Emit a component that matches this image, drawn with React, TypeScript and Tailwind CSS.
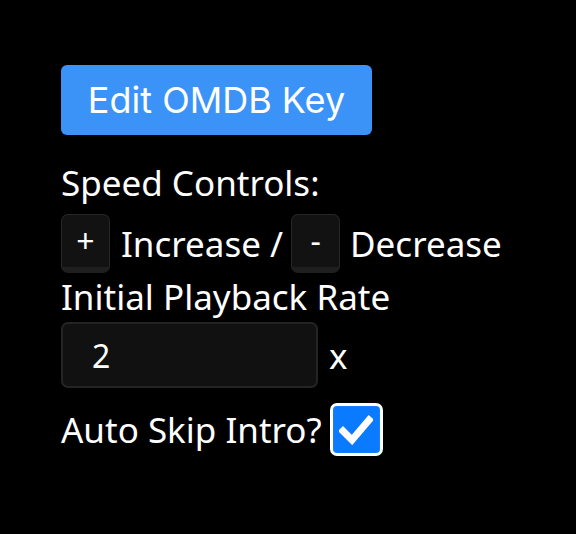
import React from "react";

export default function App() {
  const font = { fontFamily: '"Noto Sans", "Open Sans", sans-serif' };
  return (
    <div className="min-h-[534px] w-[576px] bg-black text-white" style={font}>
      <div className="flex flex-col items-start pl-[61px] pt-[65px]">
        <button
          className="h-[70px] w-[311px] rounded-[6px] bg-[#3b93f8] text-[36px] text-white leading-none"
          style={{ fontFamily: 'Inter, "Noto Sans", sans-serif' }}
        >
          Edit OMDB Key
        </button>
        <div className="mt-[26px] text-[35px] leading-[44px]">Speed Controls:</div>
        <div className="mt-[9px] flex items-center text-[35px] leading-[44px]">
          <kbd className="flex h-[59px] w-[49px] items-center justify-center rounded-[7px] border border-[#262626] border-b-[6px] border-b-[#1f1f1f] bg-[#121212] text-[32px] font-[inherit]">
            +
          </kbd>
          <span className="ml-[11px]">Increase /</span>
          <kbd className="ml-[8px] flex h-[59px] w-[49px] items-center justify-center rounded-[7px] border border-[#262626] border-b-[6px] border-b-[#1f1f1f] bg-[#121212] text-[32px] font-[inherit]">
            -
          </kbd>
          <span className="ml-[10px]">Decrease</span>
        </div>
        <div className="mt-[2px] text-[35px] leading-[44px]">Initial Playback Rate</div>
        <div className="mt-[3px] flex items-center">
          <input
            readOnly
            value="2"
            className="h-[66px] w-[257px] rounded-[7px] border-2 border-[#242424] bg-[#111111] pl-[29px] text-[32px] text-white outline-none"
            style={font}
          />
          <span className="ml-[11px] text-[35px] leading-none">x</span>
        </div>
        <div className="mt-[15px] flex items-end">
          <span className="text-[35px] leading-[44px]">Auto Skip Intro?</span>
          <span className="mb-[-4px] ml-[8px] flex h-[53px] w-[53px] items-center justify-center rounded-[7px] border-[3px] border-white bg-[#1a7dfb]">
            <span className="flex h-[45px] w-[45px] items-center justify-center rounded-[4px] bg-[#0a7aff]">
              <svg width="34" height="30" viewBox="0 0 34 30">
                <path d="M4 16 L13 25 L30 5" fill="none" stroke="white" strokeWidth="7" strokeLinecap="square" strokeLinejoin="miter" />
              </svg>
            </span>
          </span>
        </div>
      </div>
    </div>
  );
}
